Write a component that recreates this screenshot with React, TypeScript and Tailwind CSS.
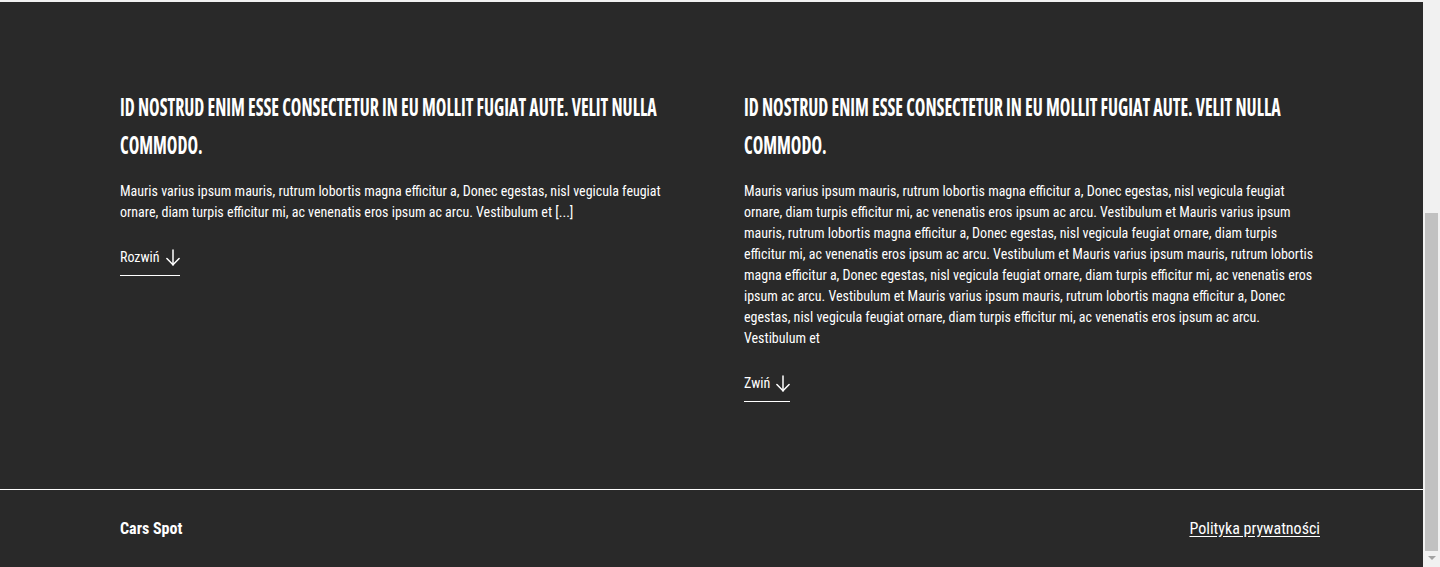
const BODY =
  "Mauris varius ipsum mauris, rutrum lobortis magna efficitur a, Donec egestas, nisl vegicula feugiat ornare, diam turpis efficitur mi, ac venenatis eros ipsum ac arcu. Vestibulum et";

const LONG = [BODY, BODY, BODY, BODY].join(" ");

function Arrow() {
  return (
    <svg width="14" height="17" viewBox="0 0 14 17" fill="none" stroke="white" strokeWidth="1.5" strokeLinecap="round" strokeLinejoin="round">
      <path d="M7 1v15" />
      <path d="M0.9 9.5 7 15.8l6.1-6.3" />
    </svg>
  );
}

function Article({ text, label }: { text: string; label: string }) {
  return (
    <div className="flex flex-col items-start">
      <h2 className="w-[766px] origin-top-left scale-x-[0.745] font-['Open_Sans',sans-serif] font-bold text-[24px] leading-[38px] text-white uppercase [font-stretch:75%]">
        Id nostrud enim esse consectetur in eu mollit fugiat aute. Velit nulla commodo.
      </h2>
      <p className="mt-[17px] text-[14px] leading-[21px] text-white">{text}</p>
      <a className="mt-[24px] flex items-center gap-[6px] border-b border-white pb-[7px] text-[14px] leading-[21px] text-white">
        <span>{label}</span>
        <Arrow />
      </a>
    </div>
  );
}

export default function App() {
  return (
    <div className="flex h-[567px] w-[1440px] overflow-hidden bg-[#292929] font-['Roboto',sans-serif] [font-stretch:75%]">
      <div className="flex w-[1423px] flex-col">
        <div className="h-[2px] bg-[#f1f1f1]" />
        <section className="flex gap-[48px] border-b border-white pl-[120px] pt-[86px] pb-[87px]">
          <div className="w-[576px]">
            <Article text={BODY + " [...]"} label="Rozwiń" />
          </div>
          <div className="w-[576px]">
            <Article text={LONG} label="Zwiń" />
          </div>
        </section>
        <footer className="flex w-[1320px] items-center justify-between pl-[120px] pt-[28px]">
          <span className="text-[16px] font-bold leading-[22px] text-white">Cars Spot</span>
          <a className="text-[16px] leading-[22px] text-white underline underline-offset-2">Polityka prywatności</a>
        </footer>
      </div>
      <div className="flex w-[17px] flex-col items-center bg-[#f1f1f1] pt-[213px]">
        <div className="h-[338px] w-[13px] bg-[#c1c1c1]" />
        <div className="mt-[5px] h-0 w-0 border-x-[4px] border-t-[4px] border-x-transparent border-t-[#a3a3a3]" />
      </div>
    </div>
  );
}
